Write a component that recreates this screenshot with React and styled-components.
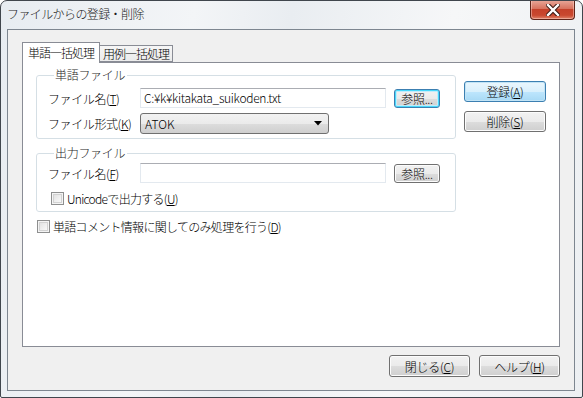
import React from "react";
import styled, { createGlobalStyle } from "styled-components";

const Global = createGlobalStyle`
  html, body {
    margin: 0;
    padding: 0;
    background: #ffffff;
    overflow: hidden;
  }
  * {
    box-sizing: border-box;
  }
`;

const font = `"Noto Sans CJK JP", "Liberation Sans", sans-serif`;

export default function App() {
  return (
    <>
      <Global />
      <Window>
        <TitleBar>
          <Title>ファイルからの登録・削除</Title>
          <CloseButton aria-label="close">
            <svg width="14" height="12" viewBox="0 0 14 12">
              <path
                d="M2 1 L12 11 M12 1 L2 11"
                stroke="#3b1a14"
                strokeWidth="4.4"
                strokeLinecap="square"
              />
              <path
                d="M2 1 L12 11 M12 1 L2 11"
                stroke="#ffffff"
                strokeWidth="2.4"
                strokeLinecap="square"
              />
            </svg>
          </CloseButton>
        </TitleBar>

        <Client>
          <TabStrip>
            <Tab active>単語一括処理</Tab>
            <Tab>用例一括処理</Tab>
          </TabStrip>

          <Panel>
            <LeftColumn>
              <Group $top={6}>
                <Legend>単語ファイル</Legend>
                <FieldRow>
                  <FieldLabel>
                    ファイル名(<u>T</u>)
                  </FieldLabel>
                  <TextBox>C:¥k¥kitakata_suikoden.txt</TextBox>
                  <Button $variant="focus" $w={46} $h={19}>
                    参照...
                  </Button>
                </FieldRow>
                <FieldRow>
                  <FieldLabel>
                    ファイル形式(<u>K</u>)
                  </FieldLabel>
                  <Select>
                    <span>ATOK</span>
                    <svg width="8" height="5" viewBox="0 0 8 5">
                      <path d="M0 0 H8 L4 4.5 Z" fill="#000" />
                    </svg>
                  </Select>
                </FieldRow>
              </Group>

              <Group $top={3}>
                <Legend>出力ファイル</Legend>
                <FieldRow>
                  <FieldLabel>
                    ファイル名(<u>F</u>)
                  </FieldLabel>
                  <TextBox />
                  <Button $w={46} $h={19}>
                    参照...
                  </Button>
                </FieldRow>
                <CheckRow $indent={3}>
                  <CheckBox />
                  <span>
                    Unicodeで出力する(<u>U</u>)
                  </span>
                </CheckRow>
              </Group>

              <CheckRow $indent={1} $outer>
                <CheckBox />
                <span>
                  単語コメント情報に関してのみ処理を行う(<u>D</u>)
                </span>
              </CheckRow>
            </LeftColumn>

            <RightColumn>
              <Button $variant="default" $w={82} $h={21}>
                登録(<u>A</u>)
              </Button>
              <Button $w={82} $h={21}>
                削除(<u>S</u>)
              </Button>
            </RightColumn>
          </Panel>

          <Footer>
            <Button $w={81} $h={22}>
              閉じる(<u>C</u>)
            </Button>
            <Button $w={81} $h={22}>
              ヘルプ(<u>H</u>)
            </Button>
          </Footer>
        </Client>
      </Window>
    </>
  );
}

const Window = styled.div`
  width: 583px;
  height: 398px;
  border: 1px solid #40464d;
  border-radius: 7px 7px 2px 2px;
  background: linear-gradient(
    100deg,
    #e7ecf1 0%,
    #f3f5f7 30%,
    #e9edf1 45%,
    #f6f7f8 70%,
    #eceff2 100%
  );
  display: flex;
  flex-direction: column;
  font-family: ${font};
  font-weight: 300;
  font-size: 12px;
  color: #000;
  overflow: hidden;
`;

const TitleBar = styled.div`
  height: 28px;
  display: flex;
  align-items: flex-start;
  padding-left: 6px;
`;

const Title = styled.div`
  margin-top: 5px;
  font-size: 12px;
  line-height: 16px;
  color: #1b1b1b;
  letter-spacing: -0.6px;
`;

const CloseButton = styled.div`
  margin-left: auto;
  margin-right: 7px;
  margin-top: -1px;
  width: 45px;
  height: 20px;
  border: 1px solid #5e2419;
  border-top: none;
  border-radius: 0 0 4px 4px;
  background: linear-gradient(
    #e9a99b 0%,
    #d8735f 45%,
    #c5412a 50%,
    #c9482f 80%,
    #e0836a 100%
  );
  box-shadow: inset 0 0 0 1px rgba(255, 220, 210, 0.45);
  display: flex;
  align-items: center;
  justify-content: center;
`;

const Client = styled.div`
  flex: 1;
  margin: 0 7px 6px 6px;
  border: 1px solid #7d8690;
  background: #f0f0f0;
  padding: 12px 14px 13px 14px;
  display: flex;
  flex-direction: column;
`;

const TabStrip = styled.div`
  height: 20px;
  display: flex;
  align-items: flex-end;
  position: relative;
  z-index: 1;
`;

const Tab = styled.div`
  height: ${(p) => (p.active ? "21px" : "17px")};
  margin-bottom: ${(p) => (p.active ? "-1px" : "0")};
  padding: ${(p) => (p.active ? "1px 5px 0 5px" : "0 3px 0 3px")};
  border: 1px solid #898c95;
  border-bottom: ${(p) => (p.active ? "none" : "1px solid #898c95")};
  border-left: ${(p) => (p.active ? "1px solid #898c95" : "none")};
  background: ${(p) =>
    p.active ? "#ffffff" : "linear-gradient(#f6f6f6, #ebebeb)"};
  font-size: 12px;
  line-height: ${(p) => (p.active ? "17px" : "15px")};
  letter-spacing: -1px;
  white-space: nowrap;
`;

const Panel = styled.div`
  flex: 1;
  border: 1px solid #898c95;
  background: #ffffff;
  display: flex;
  padding: 5px 0 0 13px;
`;

const LeftColumn = styled.div`
  width: 420px;
  display: flex;
  flex-direction: column;
  gap: 7px;
`;

const RightColumn = styled.div`
  margin-left: 8px;
  padding-top: 13px;
  display: flex;
  flex-direction: column;
  gap: 9px;
`;

const Group = styled.fieldset`
  margin: 0;
  min-width: 0;
  border: 1px solid #d5dfe5;
  border-radius: 3px;
  padding: ${(p) => p.$top}px 10px 5px 11px;
  display: flex;
  flex-direction: column;
  gap: 5px;
`;

const Legend = styled.legend`
  padding: 0 2px 0 1px;
  margin-left: 6px;
  font-size: 12px;
  line-height: 14px;
  letter-spacing: -0.3px;
  color: #1e1e1e;
`;

const FieldRow = styled.div`
  display: flex;
  align-items: center;
  height: 20px;
`;

const FieldLabel = styled.div`
  width: 92px;
  white-space: nowrap;
  letter-spacing: -0.4px;
`;

const TextBox = styled.div`
  width: 246px;
  height: 20px;
  border: 1px solid #e3e9ef;
  border-top-color: #abadb3;
  background: #ffffff;
  padding: 0 3px;
  line-height: 18px;
  font-size: 12px;
  letter-spacing: -0.3px;
  margin-right: 8px;
  white-space: nowrap;
`;

const Select = styled.div`
  width: 189px;
  height: 21px;
  border: 1px solid #707070;
  border-radius: 3px;
  background: linear-gradient(#f2f2f2 0%, #ebebeb 50%, #dddddd 51%, #cfcfcf 100%);
  display: flex;
  align-items: center;
  justify-content: space-between;
  padding: 0 6px 0 4px;
  line-height: 19px;
`;

const buttonBg = {
  normal: {
    border: "#707070",
    bg: "linear-gradient(#f2f2f2 0%, #ebebeb 50%, #dddddd 51%, #cfcfcf 100%)",
    inset: "inset 0 0 0 1px #fcfcfc",
  },
  default: {
    border: "#3c7fb1",
    bg: "linear-gradient(#eaf6fd 0%, #d9f0fc 50%, #bee6fd 51%, #a7d9f5 100%)",
    inset: "inset 0 0 0 1px #c2e4f6",
  },
  focus: {
    border: "#3c7fb1",
    bg: "linear-gradient(#f2f2f2 0%, #ebebeb 50%, #dddddd 51%, #cfcfcf 100%)",
    inset: "inset 0 0 0 1px #48d8fb, inset 0 0 0 2px #c2ecfb",
  },
};

const Button = styled.div`
  width: ${(p) => p.$w}px;
  height: ${(p) => p.$h}px;
  flex: none;
  border: 1px solid ${(p) => buttonBg[p.$variant || "normal"].border};
  border-radius: 3px;
  background: ${(p) => buttonBg[p.$variant || "normal"].bg};
  box-shadow: ${(p) => buttonBg[p.$variant || "normal"].inset};
  display: flex;
  align-items: center;
  justify-content: center;
  font-size: 12px;
  white-space: nowrap;
  letter-spacing: -0.3px;
`;

const CheckRow = styled.label`
  display: flex;
  align-items: center;
  gap: 3px;
  height: 16px;
  margin-left: ${(p) => p.$indent}px;
  margin-top: ${(p) => (p.$outer ? "-1px" : "2px")};
  white-space: nowrap;
  letter-spacing: -0.7px;
`;

const CheckBox = styled.span`
  width: 13px;
  height: 13px;
  flex: none;
  border: 1px solid #8e8f8f;
  background: linear-gradient(135deg, #dcdcdc, #ffffff);
  box-shadow: inset 0 0 0 1px #f4f4f4, inset 0 0 0 2px #d2d2d2;
`;

const Footer = styled.div`
  margin-top: 8px;
  display: flex;
  justify-content: flex-end;
  gap: 9px;
`;
